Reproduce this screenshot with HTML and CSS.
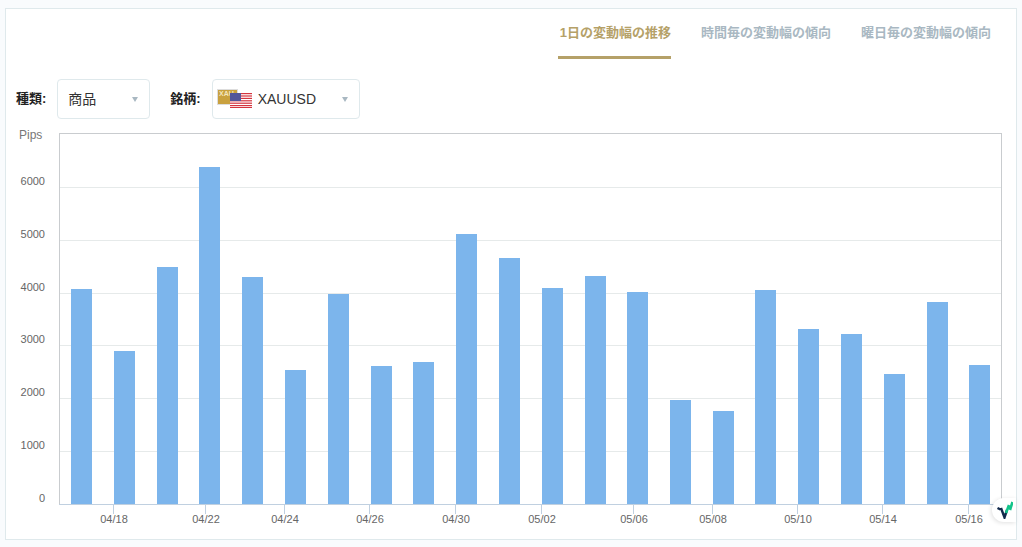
FILE: index.html
```html
<!DOCTYPE html>
<html lang="ja">
<head>
<meta charset="utf-8">
<title>1日の変動幅の推移</title>
<link rel="stylesheet" href="styles.css">
</head>
<body>
<main class="card">
  <nav class="tabs">
    <a class="tab active">1日の変動幅の推移</a>
    <a class="tab">時間毎の変動幅の傾向</a>
    <a class="tab">曜日毎の変動幅の傾向</a>
  </nav>
  <div class="filters">
    <span class="filter-label first">種類:</span>
    <div class="select select-type"><span class="type-name">商品</span><i class="caret"></i></div>
    <span class="filter-label second">銘柄:</span>
    <div class="select select-symbol">
      <svg class="flag" width="36" height="20" viewBox="0 0 36 20">
        <rect x="0.5" y="0.5" width="20" height="15" fill="#c9a13f" stroke="#ddd"/>
        <text x="2" y="7" class="xau">XAU</text>
        <rect x="13" y="4" width="22" height="15" fill="#fff"/>
        <g fill="#d4343f">
          <rect x="13" y="4" width="22" height="1.2"/><rect x="13" y="6.4" width="22" height="1.2"/>
          <rect x="13" y="8.8" width="22" height="1.2"/><rect x="13" y="11.2" width="22" height="1.2"/>
          <rect x="13" y="13.6" width="22" height="1.2"/><rect x="13" y="16" width="22" height="1.2"/>
          <rect x="13" y="18" width="22" height="1"/>
        </g>
        <rect x="13" y="4" width="11" height="8" fill="#52569a"/>
      </svg>
      <span class="symbol-name">XAUUSD</span><i class="caret"></i>
    </div>
  </div>
  <svg class="chart" width="1010" height="423" viewBox="0 -10 1010 423">
    <g id="grid" class="grid"></g>
    <g id="bars" class="bars"></g>
    <rect class="plot" x="53.5" y="0.5" width="942" height="371"/>
    <line class="axis" x1="53" y1="371.5" x2="996" y2="371.5"/>
    <g id="ticks" class="ticks"></g>
    <text class="pips" x="13" y="6">Pips</text>
    <g id="ylabels" class="label"></g>
    <g id="xlabels" class="label"></g>
  </svg>
  <div class="widget">
    <svg width="18" height="18" viewBox="0 0 18 18">
      <path d="M2.5 7 L5.5 8.5 M6 7 L9.5 16.5 L12 9" fill="none" stroke="#12294b" stroke-width="2.4"/>
      <path d="M11 12 L14 4 M15 9 L17.5 1" fill="none" stroke="#12c48a" stroke-width="2.6"/>
    </svg>
  </div>
</main>
<script src="chart.js"></script>
</body>
</html>
```
FILE: styles.css
```css
* { box-sizing: border-box; }
html, body { margin: 0; height: 100%; }
body {
  background: #f9fbfd;
  padding: 8px 5px 7px 5px;
  font-family: "Liberation Sans", "Noto Sans CJK JP", sans-serif;
  overflow: hidden;
}
.card {
  position: relative;
  width: 1012px;
  height: 532px;
  background: #fff;
  border: 1px solid #dfe9ec;
}
.tabs {
  display: flex;
  justify-content: flex-end;
  gap: 30px;
  height: 50px;
  padding-right: 25px;
}
.tab {
  display: block;
  height: 50px;
  padding-top: 15px;
  font-size: 13px;
  line-height: 17px;
  font-weight: 700;
  color: #a9b8c2;
}
.tab.active {
  color: #b5a168;
  border-bottom: 3px solid #b5a168;
  padding-left: 2px;
}
.filters {
  display: flex;
  align-items: center;
  height: 40px;
  margin-top: 20px;
}
.filter-label {
  font-size: 13px;
  font-weight: 700;
  color: #222;
}
.filter-label.first { margin-left: 10px; margin-right: 11px; margin-top: -3px; }
.filter-label.second { margin-left: 20px; margin-right: 11px; margin-top: -3px; }
.select {
  position: relative;
  display: flex;
  align-items: center;
  height: 40px;
  border: 1px solid #dfe9ec;
  border-radius: 4px;
  font-size: 14px;
  color: #333;
}
.select-type { width: 93px; padding-left: 10px; }
.select-symbol { width: 148px; padding-left: 4px; }
.type-name { margin-top: -2px; }
.flag { flex: none; margin-top: -1px; }
.xau { font-size: 7px; font-weight: 700; fill: #f4e6bd; }
.symbol-name { margin-left: 5px; }
.caret {
  position: absolute;
  right: 11px;
  top: 17px;
  width: 0;
  height: 0;
  border-left: 3.5px solid transparent;
  border-right: 3.5px solid transparent;
  border-top: 5px solid #a9b8c2;
}
.chart { display: block; margin-top: 4px; }
.grid line { stroke: #e6eaea; stroke-width: 1; }
.bars rect { fill: #7cb5ec; }
.plot { fill: none; stroke: #c9cccf; stroke-width: 1; }
.axis { stroke: #c0d0e0; stroke-width: 1; }
.ticks line { stroke: #c0d0e0; stroke-width: 1; }
.label text { font-size: 11px; fill: #666; }
.pips { font-size: 12px; fill: #777; }
.widget {
  position: absolute;
  right: 0;
  top: 489px;
  width: 24px;
  height: 24px;
  display: flex;
  align-items: center;
  justify-content: center;
  background: #fff;
  border-radius: 12px 0 0 12px;
  box-shadow: -1px 1px 4px rgba(0, 0, 0, 0.12);
}
```
FILE: chart.js
```js
const NS = 'http://www.w3.org/2000/svg';
const OX = 6, OY = 133; // chart plot origin in page coords
const add = (parent, tag, attrs, text) => {
  const el = document.createElementNS(NS, tag);
  for (const k in attrs) el.setAttribute(k, attrs[k]);
  if (text) el.textContent = text;
  document.getElementById(parent).appendChild(el);
};
const centers = [81.5,124.5,167.5,209.5,252.5,295.5,338.5,381.5,423.5,466.5,509.5,552.5,595.5,637.5,680.5,723.5,765.5,808.5,851.5,894.5,937.5,979.5];
const tops = [289,351,267,167,277,370,294,366,362,234,258,288,276,292,400,411,290,329,334,374,302,365];
centers.forEach((c, i) => add('bars', 'rect', { x: c - 10.5 - OX, y: tops[i] - OY, width: 21, height: 504 - tops[i] }));
[187,240,293,345,398,451].forEach(y => add('grid', 'line', { x1: 59 - OX, x2: 1001 - OX, y1: y - OY + 0.5, y2: y - OY + 0.5 }));
[[6000,185],[5000,238],[4000,291],[3000,343],[2000,396],[1000,449],[0,502]].forEach(([v, y]) =>
  add('ylabels', 'text', { x: 45 - OX, y: y - OY, 'text-anchor': 'end' }, String(v)));
[['04/18',113],['04/22',205],['04/24',284],['04/26',369],['04/30',455],['05/02',541],['05/06',633],['05/08',712],['05/10',797],['05/14',882],['05/16',968]].forEach(([t, x]) => {
  add('ticks', 'line', { x1: x - OX + 0.5, x2: x - OX + 0.5, y1: 372, y2: 381 });
  add('xlabels', 'text', { x: x - OX + 1, y: 523 - OY, 'text-anchor': 'middle' }, t);
});
```
